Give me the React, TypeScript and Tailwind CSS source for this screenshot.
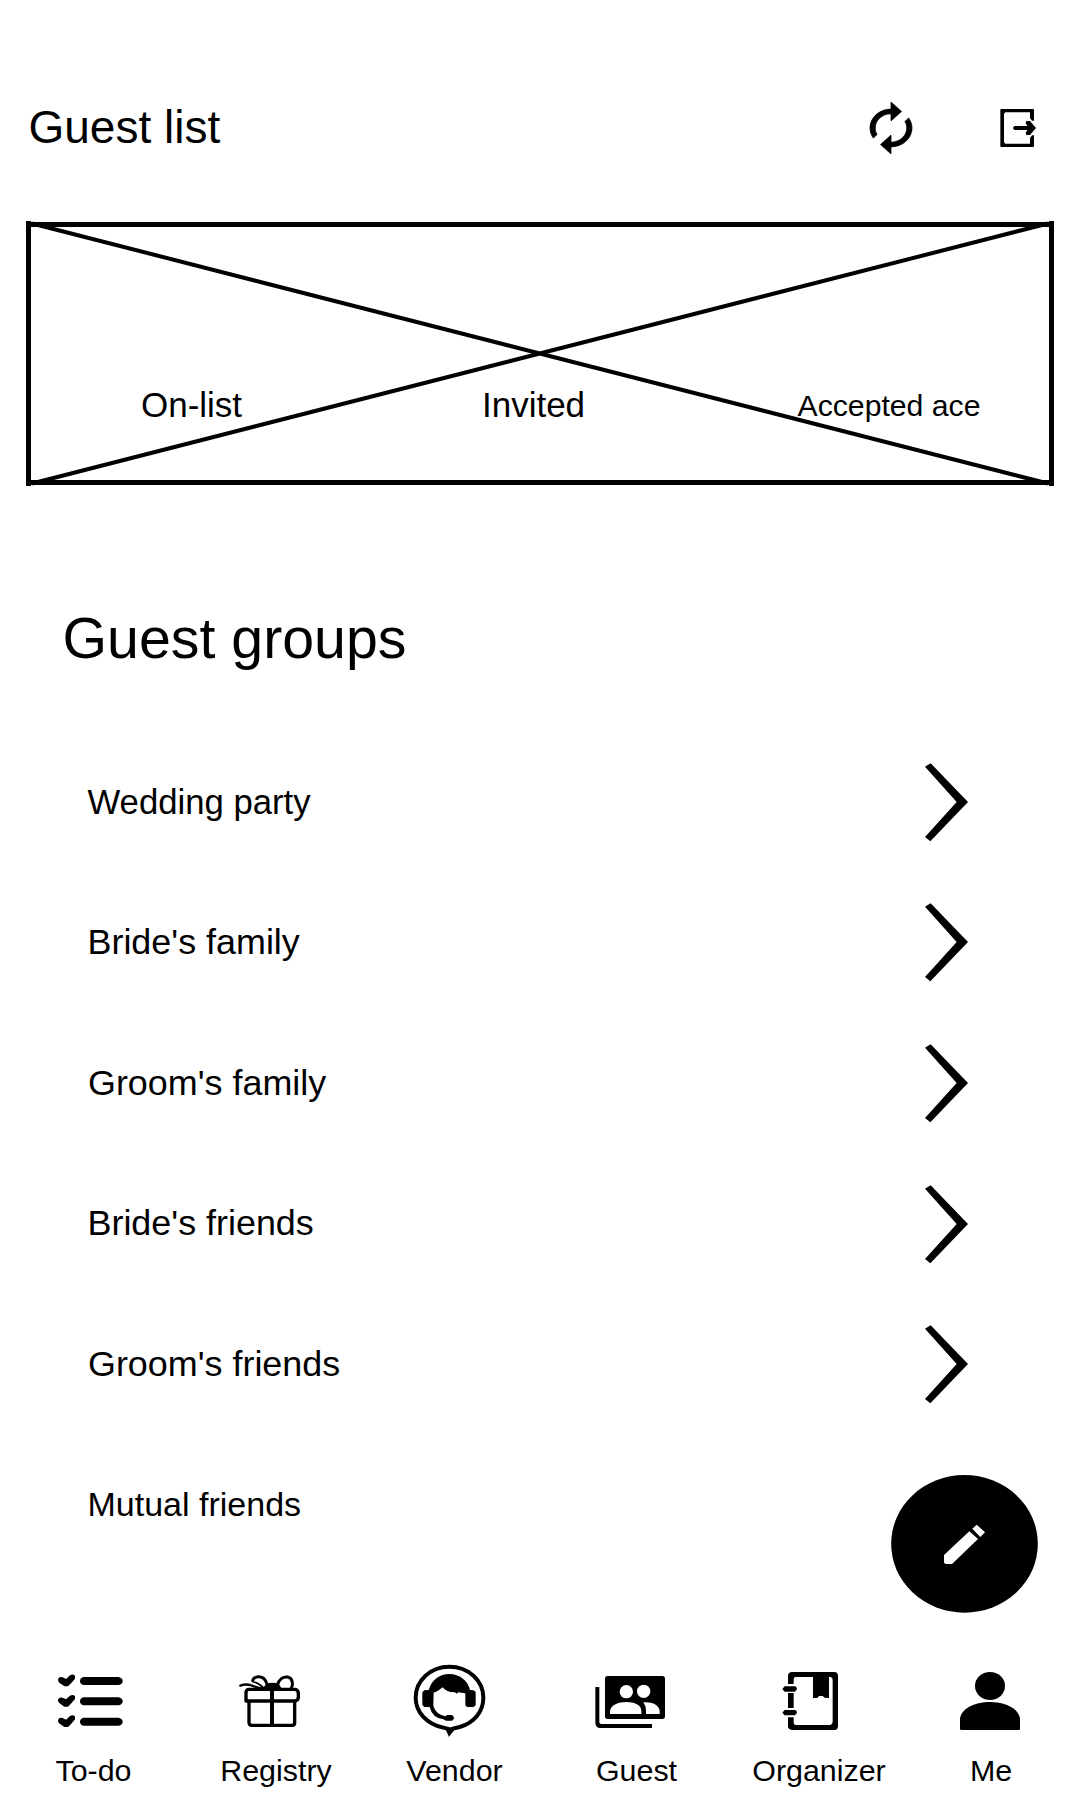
import React from "react";

const groups = [
  { name: "Wedding party", cls: "pl-[87.5px] text-[34.7px]" },
  { name: "Bride's family", cls: "pl-[87.5px] pt-px text-[35.9px]" },
  { name: "Groom's family", cls: "pl-[88px] pt-px text-[35.9px]" },
  { name: "Bride's friends", cls: "pl-[87.5px] text-[35.9px]" },
  { name: "Groom's friends", cls: "pl-[88px] text-[35.9px]" },
  { name: "Mutual friends", cls: "pl-[87.5px] pb-[2px] text-[34px]" },
];

function HeaderIcons() {
  return (
    <svg className="h-[100px] w-[240px]" viewBox="0 0 720 300">
      <path
        transform="translate(58.5 58.9) scale(7.875 7.09)"
        stroke="#000"
        strokeWidth="0.3"
        d="M12 6v3l4-4-4-4v3c-4.42 0-8 3.58-8 8 0 1.57.46 3.03 1.24 4.26L6.7 14.8c-.45-.83-.7-1.79-.7-2.8 0-3.31 2.69-6 6-6zm6.76 1.74L17.3 9.2c.44.84.7 1.79.7 2.8 0 3.31-2.69 6-6 6v-3l-4 4 4 4v-3c4.42 0 8-3.58 8-8 0-1.57-.46-3.03-1.24-4.26z"
      />
      <path d="M484 87h95q3 0 3 3v32h-6l-6-7V97H496l-4 4v86l4 4h74v-17l6-8h6v32q0 3-3 3h-95q-3 0-3-3V90q0-3 3-3z" />
      <path d="M525 138h37l-5-8 2-7h11l18 21-18 21h-11l-2-7 5-8h-37q-6-1-6-6t6-6z" />
    </svg>
  );
}

function Chevron() {
  return (
    <svg className="mr-[108px] h-[80px] w-[50px]" viewBox="0 0 150 240">
      <path d="M9 14 26 4 138 120 25 238 9 225 104 120z" />
    </svg>
  );
}

function TodoIcon() {
  return (
    <svg className="h-[90px] w-full" viewBox="-120 0 561 270">
      {[93, 154, 215].map((y) => (
        <g key={y} transform={`translate(0 ${y})`}>
          <path d="M54-5Q57-14 68-11L78-6 90-17Q98-22 105-16V-7L94 6 84 16H73L59 6Q53 1 54-5z" />
          <path d="M130-12H236q12 3 12 12t-12 12H130q-10-3-10-12t10-12z" />
        </g>
      ))}
    </svg>
  );
}

function GiftIcon() {
  return (
    <svg className="h-[90px] w-full" viewBox="441 0 534 270">
      <g fill="none" stroke="#000" strokeWidth="10" strokeLinejoin="round" strokeLinecap="round">
        <path d="M625 118H766q9 2 9 12v12q0 9-9 11H618V128q0-8 7-10z" />
        <path d="M627 156v61q0 9 8 9h121q8 0 8-8v-62" />
        <path d="M682 107C678 88 668 79 655 80q-14 1-17 12" strokeWidth="9" />
        <path d="M712 106C716 88 730 79 743 81c14 3 18 20 11 33" strokeWidth="9" />
        <path d="M601 107q14-6 30-2 22 9 40 11" strokeWidth="7" />
        <path d="M640 96q12 1 28 15" strokeWidth="5" />
      </g>
      <path d="M680 101q17-6 36 0l10 16h-24v110h-12V118l-38-2 20-6z" />
    </svg>
  );
}

function VendorIcon() {
  return (
    <svg className="h-[90px] w-full" viewBox="-45 0 537 270">
      <path
        d="M208 50C152 50 107 91 107 143c0 44 34 79 83 90l12 3 5 10 12-10 20-5c42-12 71-45 71-88 0-52-45-93-102-93z"
        fill="none"
        stroke="#000"
        strokeWidth="12"
      />
      <path d="M200 232h30l-24 29z" />
      <path d="M146 120C155 90 178 72 208 72S264 92 270 120L281 121 287 126V165L281 171H261L256 166V130Q243 128 235 127L230 131 225 127Q200 128 188 112 175 124 161 128L160 168Q167 192 196 199L202 195H216Q223 200 222 206L216 212H198L190 208Q157 204 149 171L133 171 127 165V127L133 121z" />
    </svg>
  );
}

function GuestIcon() {
  return (
    <svg className="h-[90px] w-full" viewBox="492 0 555 270">
      <path d="M683 78H847q8 0 8 8V199q0 8-8 8H683q-8 0-8-8V86q0-8 8-8z" />
      <path d="M646 111h12v105q0 6 6 6h152v12H661q-15-1-15-16z" />
      <g fill="#fff">
        <circle cx="739" cy="125" r="20" />
        <circle cx="791" cy="124" r="20" />
        <path d="M690 192v-10c3-17 24-26 49-26s45 9 45 26v10z" />
        <path d="M790 157c27-2 47 8 49 25v10h-41v-12q0-12-8-23z" />
      </g>
    </svg>
  );
}

function OrganizerIcon() {
  return (
    <svg className="h-[90px] w-full" viewBox="-3 0 540 270">
      <path d="M186 66H313q11 1 11 11V229q0 11-11 11H186q-12-1-12-11V202h17v16q0 7 7 7H300q8-2 8-11V90q0-8-6-9h-5v63l-13-1-6-5h-11l-5 6h-13V81H197q-6 0-6 7v14H174V78q0-11 12-12z" />
      <path d="M174 129h17v45h-17z" />
      <path d="M157 117l7-8h31q6 2 6 8l-6 8h-31zM157 188l7-8h31q6 2 6 8l-6 8h-31z" />
    </svg>
  );
}

function MeIcon() {
  return (
    <svg className="h-[90px] w-full" viewBox="537 0 492 270">
      <ellipse cx="780" cy="108" rx="45" ry="42" />
      <path d="M690 236V207c2-30 42-51 90-51s88 21 90 51v29q0 4-4 4H694q-4 0-4-4z" />
    </svg>
  );
}

const tabs = [
  { label: "To-do", Icon: TodoIcon, cls: "w-[187px]" },
  { label: "Registry", Icon: GiftIcon, cls: "w-[178px]" },
  { label: "Vendor", Icon: VendorIcon, cls: "w-[179px]" },
  { label: "Guest", Icon: GuestIcon, cls: "w-[185px]" },
  { label: "Organizer", Icon: OrganizerIcon, cls: "w-[180px]" },
  { label: "Me", Icon: MeIcon, cls: "w-[164px]" },
];

export default function App() {
  return (
    <div className="relative flex h-[1800px] w-[1080px] flex-col overflow-hidden bg-white font-['Liberation_Sans',Arial,sans-serif] text-black">
      <header className="flex h-[220px] shrink-0 items-start justify-between pt-[80px]">
        <h1 className="pl-[28.5px] text-[46px] leading-[94px]">Guest list</h1>
        <HeaderIcons />
      </header>

      <section className="relative h-[267px] shrink-0">
        <svg className="absolute inset-0 h-full w-full" viewBox="0 220 1080 267">
          <path d="M26 221h5V222H1049v-1h5V486h-5V485H31v1H26zM31 227V480H1049V227z" fillRule="evenodd" />
          <path d="M32 223.5 1048 483.5M32 483.5 1048 223.5" fill="none" stroke="#000" strokeWidth="4" />
        </svg>
        <div className="relative flex w-[1080px] pt-[165px] leading-10">
          <span className="w-[383px] shrink-0 text-center text-[35px]">On-list</span>
          <span className="w-[301px] shrink-0 text-center text-[35px]">Invited</span>
          <span className="w-[396px] shrink-0 pl-[14px] pt-px text-center text-[30.2px]">Accepted ace</span>
        </div>
      </section>

      <main className="flex-1 pt-[111px]">
        <h2 className="pl-[62.5px] text-[57.3px] leading-[80px]">Guest groups</h2>
        <ul className="pt-[53.4px]">
          {groups.map((g, i) => (
            <li key={g.name} className="flex h-[140.7px] items-center justify-between">
              <span className={g.cls}>{g.name}</span>
              {i < 5 && <Chevron />}
            </li>
          ))}
        </ul>
      </main>

      <button className="absolute top-[1475px] left-[891px] h-[138px] w-[147px]" aria-label="Edit guest groups">
        <svg className="h-full w-full" viewBox="93 105 441 414">
          <ellipse cx="313.5" cy="311.5" rx="220" ry="206.5" />
          <path d="M252 345 328 274 354 297 276 372H257L252 368zM337 266 350 254 375 277 361 291z" fill="#fff" />
        </svg>
      </button>

      <nav className="flex h-[150px] shrink-0">
        {tabs.map(({ label, Icon, cls }) => (
          <div key={label} className={`flex flex-col items-center ${cls}`}>
            <Icon />
            <span className="text-[30.4px] leading-[60px]">{label}</span>
          </div>
        ))}
      </nav>
    </div>
  );
}
